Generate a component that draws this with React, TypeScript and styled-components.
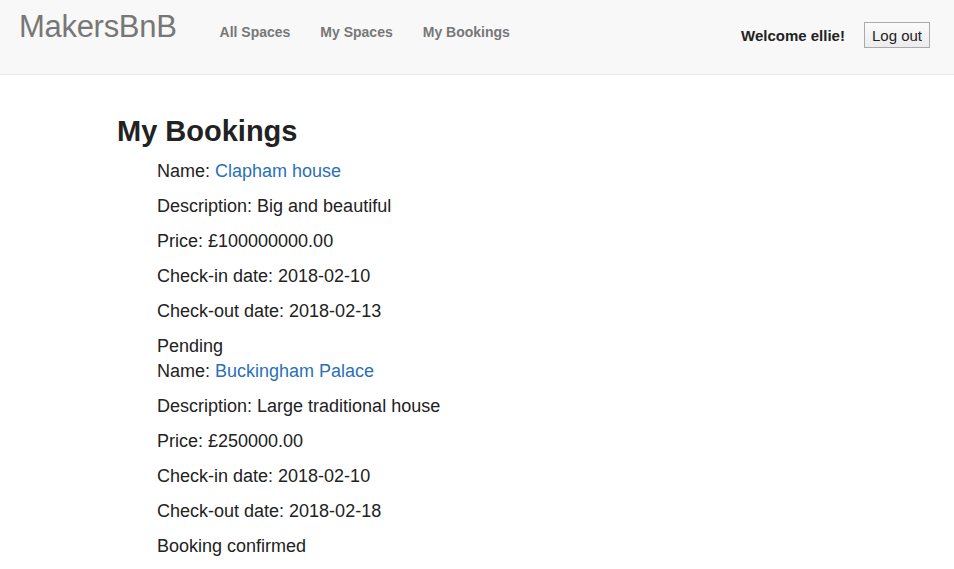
import { FC } from 'react';
import styled, { createGlobalStyle } from 'styled-components';

type Booking = {
	name: string;
	description: string;
	price: string;
	checkIn: string;
	checkOut: string;
	status: string;
};

const bookings: Booking[] = [
	{
		name: 'Clapham house',
		description: 'Big and beautiful',
		price: '£100000000.00',
		checkIn: '2018-02-10',
		checkOut: '2018-02-13',
		status: 'Pending',
	},
	{
		name: 'Buckingham Palace',
		description: 'Large traditional house',
		price: '£250000.00',
		checkIn: '2018-02-10',
		checkOut: '2018-02-18',
		status: 'Booking confirmed',
	},
];

const GlobalStyle = createGlobalStyle`
	body {
		margin: 0;
		background: #fff;
		font-family: "Liberation Sans", Arial, Helvetica, sans-serif;
		color: #222;
	}
`;

const App: FC = () => (
	<>
		<GlobalStyle />
		<Navbar>
			<Brand href="#">MakersBnB</Brand>
			<NavLinks>
				<NavLink href="#">All Spaces</NavLink>
				<NavLink href="#">My Spaces</NavLink>
				<NavLink href="#">My Bookings</NavLink>
			</NavLinks>
			<UserArea>
				<Welcome>Welcome ellie!</Welcome>
				<LogoutButton type="button">Log out</LogoutButton>
			</UserArea>
		</Navbar>
		<Main>
			<Title>My Bookings</Title>
			<List>
				{bookings.map((b) => (
					<Item key={b.name}>
						<Line>
							Name: <NameLink href="#">{b.name}</NameLink>
						</Line>
						<Line>Description: {b.description}</Line>
						<Line>Price: {b.price}</Line>
						<Line>Check-in date: {b.checkIn}</Line>
						<Line>Check-out date: {b.checkOut}</Line>
						<Status>{b.status}</Status>
					</Item>
				))}
			</List>
		</Main>
	</>
);

const Navbar = styled.nav`
	display: flex;
	align-items: flex-start;
	height: 75px;
	box-sizing: border-box;
	background: #f8f8f8;
	border-bottom: 1px solid #e7e7e7;
	padding: 0 24px 0 19px;
`;

const Brand = styled.a`
	color: #777;
	text-decoration: none;
	font-size: 31px;
	line-height: 30px;
	margin-top: 12px;
	letter-spacing: -0.3px;
`;

const NavLinks = styled.div`
	display: flex;
	gap: 30px;
	margin-left: 43px;
	margin-top: 24px;
`;

const NavLink = styled.a`
	color: #777;
	font-weight: bold;
	font-size: 14px;
	line-height: 16px;
	text-decoration: none;
`;

const UserArea = styled.div`
	margin-left: auto;
	display: flex;
	align-items: center;
	gap: 19px;
	margin-top: 22px;
`;

const Welcome = styled.span`
	color: #222;
	font-weight: bold;
	font-size: 15px;
`;

const LogoutButton = styled.button`
	font-family: "Liberation Sans", Arial, sans-serif;
	font-size: 15px;
	color: #222;
	height: 26px;
	padding: 0 7px;
	border: 1px solid #aaa;
	background: linear-gradient(#fbfbfb, #ececec);
	border-radius: 0;
`;

const Main = styled.main`
	padding: 39px 0 0 117px;
`;

const Title = styled.h1`
	margin: 0 0 11px;
	font-size: 29px;
	line-height: 34px;
	font-weight: bold;
	color: #222;
`;

const List = styled.div`
	padding-left: 40px;
`;

const Item = styled.div``;

const Line = styled.p`
	margin: 0 0 10px;
	font-size: 18px;
	line-height: 25px;
`;

const Status = styled.div`
	font-size: 18px;
	line-height: 25px;
`;

const NameLink = styled.a`
	color: #2a6fba;
	text-decoration: none;
`;

export default App;
